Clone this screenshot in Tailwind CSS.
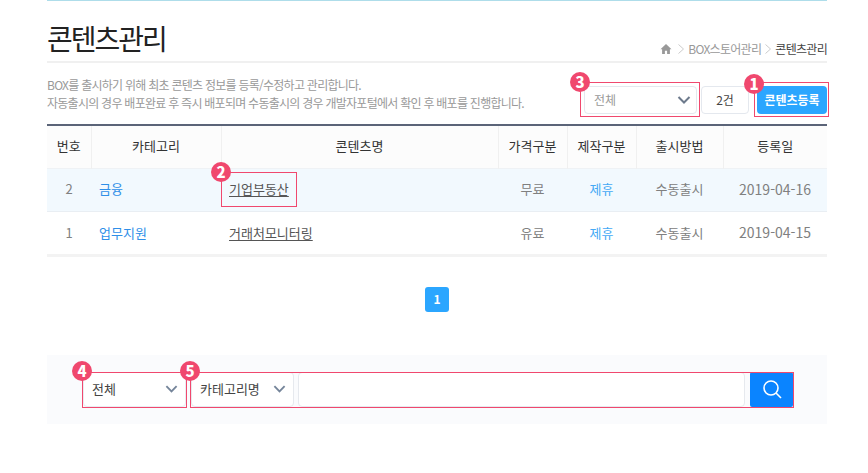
<!DOCTYPE html>
<html lang="ko">
  <head>
    <meta charset="UTF-8" />
    <title>콘텐츠관리</title>
    <script src="https://cdn.jsdelivr.net/npm/@tailwindcss/browser@4"></script>
  </head>
  <body class="bg-white h-[473px] overflow-hidden font-['Noto_Sans_CJK_KR','Noto_Sans',sans-serif]">
    <div class="relative w-[780px] ml-[47px]">
      <div class="h-px bg-[#aeddea]"></div>

      <!-- title -->
      <div class="flex justify-between items-end h-[60px] border-b-2 border-[#f0f0f0] box-content">
        <h1 class="text-[28px] leading-[40px] mb-[3px] text-[#222] tracking-[-2px]">콘텐츠관리</h1>
        <div class="flex items-center h-5 mb-[2px] text-[12px] text-[#999] tracking-[-0.7px]">
          <svg class="w-[12px] h-[12px] mr-[3px]" viewBox="0 0 12 12"><path fill="#999" d="M6 1 0.5 6.2h1.6V11h2.8V7.8h2.2V11h2.8V6.2h1.6z" /></svg>
          <svg class="w-[8px] h-[12px] mx-[2px]" viewBox="0 0 8 12"><path fill="none" stroke="#ccc" d="M1.5 1.5 6.5 6l-5 4.5" /></svg>
          <span class="ml-[1px]">BOX스토어관리</span>
          <svg class="w-[8px] h-[12px] mx-[3px]" viewBox="0 0 8 12"><path fill="none" stroke="#ccc" d="M1.5 1.5 6.5 6l-5 4.5" /></svg>
          <span class="text-[#444]">콘텐츠관리</span>
        </div>
      </div>

      <!-- description and actions -->
      <div class="flex justify-between h-[61px]">
        <p class="pt-[13px] text-[12px] leading-[18px] text-[#999] tracking-[-0.74px]">
          BOX를 출시하기 위해 최초 콘텐츠 정보를 등록/수정하고 관리합니다.<br />
          자동출시의 경우 배포완료 후 즉시 배포되며 수동출시의 경우 개발자포털에서 확인 후 배포를 진행합니다.
        </p>
        <div class="flex pt-[23px] gap-[4px]">
          <div class="flex items-center justify-between w-[113px] h-[28px] pl-[9px] pr-[5px] bg-white border border-[#e4e8ee] rounded-[4px] text-[12px] text-[#999]">
            전체
            <svg class="w-[14px] h-[8px]" viewBox="0 0 14 8"><path fill="none" stroke="#6d7a8c" stroke-width="2" d="M1.5 1 7 6.5 12.5 1" /></svg>
          </div>
          <div class="flex items-center justify-center w-[48px] h-[28px] bg-white border border-[#e4e8ee] rounded-[4px] text-[12px] text-[#444]">2건</div>
          <button class="w-[70px] h-[28px] ml-[4px] bg-[#2ba6ff] rounded-[4px] text-[12px] font-bold text-white">콘텐츠등록</button>
        </div>
      </div>

      <!-- list -->
      <table class="w-full table-fixed border-t-2 border-[#5b6478] border-b-[3px] border-b-[#f3f3f3] text-[13px] text-center">
        <colgroup>
          <col class="w-[44px]" /><col class="w-[130px]" /><col class="w-[277px]" /><col class="w-[69px]" /><col class="w-[69px]" /><col class="w-[87px]" /><col class="w-[104px]" />
        </colgroup>
        <thead>
          <tr class="h-[43px] bg-[#fcfcfc] border-b border-[#eff2f5] text-[#333]">
            <th class="pb-[2px] font-normal border-r border-[#f0f0f0]">번호</th>
            <th class="pb-[2px] font-normal border-r border-[#f0f0f0]">카테고리</th>
            <th class="pb-[2px] font-normal border-r border-[#f0f0f0]">콘텐츠명</th>
            <th class="pb-[2px] font-normal border-r border-[#f0f0f0]">가격구분</th>
            <th class="pb-[2px] font-normal border-r border-[#f0f0f0]">제작구분</th>
            <th class="pb-[2px] font-normal border-r border-[#f0f0f0]">출시방법</th>
            <th class="pb-[2px] font-normal">등록일</th>
          </tr>
        </thead>
        <tbody class="text-[#808080]">
          <tr class="h-[43px] bg-[#f2f9fe] border-b border-[#e9eef3]">
            <td class="pb-[2px]">2</td>
            <td class="pb-[2px] text-left pl-[8px] text-[#2f8fe8]">금융</td>
            <td class="pb-[2px] text-left pl-[8px] text-[#555] underline underline-offset-2">기업부동산</td>
            <td class="pb-[2px]">무료</td>
            <td class="pb-[2px] text-[#45a9f5]">제휴</td>
            <td class="pb-[2px]">수동출시</td>
            <td class="text-[14px]">2019-04-16</td>
          </tr>
          <tr class="h-[44px]">
            <td>1</td>
            <td class="text-left pl-[8px] text-[#2f8fe8]">업무지원</td>
            <td class="text-left pl-[8px] text-[#555] underline underline-offset-2">거래처모니터링</td>
            <td>유료</td>
            <td class="text-[#45a9f5]">제휴</td>
            <td>수동출시</td>
            <td class="text-[14px]">2019-04-15</td>
          </tr>
        </tbody>
      </table>

      <!-- paging -->
      <div class="flex justify-center h-[98px] pt-[30px]">
        <span class="flex items-center justify-center w-[24px] h-[25px] bg-[#2ba6ff] rounded-[3px] text-[12px] font-bold text-white">1</span>
      </div>

      <!-- search -->
      <div class="flex items-center h-[69px] pl-[36px] bg-[#fafbfd]">
        <div class="flex items-center justify-between w-[103px] h-[35px] pl-[8px] pr-[7px] bg-white border border-[#e9ecf1] rounded-[4px] text-[13px] text-[#444]">
          전체
          <svg class="w-[13px] h-[8px]" viewBox="0 0 14 8"><path fill="none" stroke="#75859a" stroke-width="2" d="M1.5 1 7 6.5 12.5 1" /></svg>
        </div>
        <div class="flex items-center justify-between w-[103px] h-[35px] ml-[5px] pl-[8px] pr-[7px] bg-white border border-[#e6e9ee] rounded-[4px] text-[13px] text-[#444]">
          카테고리명
          <svg class="w-[13px] h-[8px]" viewBox="0 0 14 8"><path fill="none" stroke="#75859a" stroke-width="2" d="M1.5 1 7 6.5 12.5 1" /></svg>
        </div>
        <div class="w-[447px] h-[35px] ml-[4px] bg-white border border-[#e6e9ee] rounded-[4px]"></div>
        <button class="flex items-center justify-center w-[43px] h-[35px] ml-[5px] bg-[#0a84ff] rounded-[2px]">
          <svg class="w-[20px] h-[20px]" viewBox="0 0 20 20"><circle cx="9" cy="9" r="7" fill="none" stroke="#fff" stroke-width="1.6" /><path stroke="#fff" stroke-width="1.6" d="m14 14 5 5" /></svg>
        </button>
      </div>

      <!-- guide markers over the page -->
      <div class="absolute left-[707px] top-[82px] w-[75px] h-[35px] border border-[#f0486e]"></div>
      <div class="absolute left-[533px] top-[82px] w-[120px] h-[35px] border border-[#f0486e]"></div>
      <div class="absolute left-[174px] top-[172px] w-[76px] h-[35px] border border-[#f0486e]"></div>
      <div class="absolute left-[35px] top-[372px] w-[105px] h-[36px] border border-[#f0486e]"></div>
      <div class="absolute left-[143px] top-[372px] w-[604px] h-[36px] border border-[#f0486e]"></div>
      <span class="absolute left-[697px] top-[74px] flex items-center justify-center w-5 h-5 rounded-full bg-[#f0486e] text-[15px] font-extrabold text-white">1</span>
      <span class="absolute left-[523px] top-[72px] flex items-center justify-center w-5 h-5 rounded-full bg-[#f0486e] text-[15px] font-extrabold text-white">3</span>
      <span class="absolute left-[164px] top-[162px] flex items-center justify-center w-5 h-5 rounded-full bg-[#f0486e] text-[15px] font-extrabold text-white">2</span>
      <span class="absolute left-[25px] top-[361px] flex items-center justify-center w-5 h-5 rounded-full bg-[#f0486e] text-[15px] font-extrabold text-white">4</span>
      <span class="absolute left-[133px] top-[361px] flex items-center justify-center w-5 h-5 rounded-full bg-[#f0486e] text-[15px] font-extrabold text-white">5</span>
    </div>
  </body>
</html>
